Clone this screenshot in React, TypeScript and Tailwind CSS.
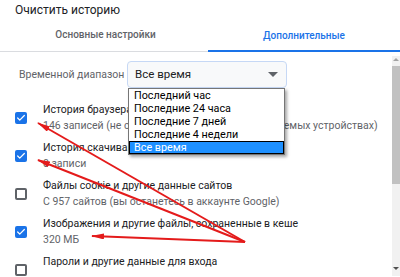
import { Check } from "lucide-react";

const options = [
  "Последний час",
  "Последние 24 часа",
  "Последние 7 дней",
  "Последние 4 недели",
  "Все время",
];

const items = [
  {
    title: "История браузера",
    sub: "146 записей (не считая данных на синхронизируемых устройствах)",
    checked: true,
  },
  { title: "История скачиваний", sub: "0 записи", checked: true },
  {
    title: "Файлы cookie и другие данные сайтов",
    sub: "С 957 сайтов (вы останетесь в аккаунте Google)",
    checked: false,
  },
  {
    title: "Изображения и другие файлы, сохраненные в кеше",
    sub: "320 МБ",
    checked: true,
  },
  { title: "Пароли и другие данные для входа", sub: "", checked: false },
];

function Box({ checked }: { checked: boolean }) {
  if (checked) {
    return (
      <span className="flex h-[12px] w-[12px] shrink-0 items-center justify-center rounded-[2px] bg-[#1a73e8]">
        <Check className="h-[10px] w-[10px] text-white" strokeWidth={3} />
      </span>
    );
  }
  return (
    <span className="h-[12px] w-[12px] shrink-0 rounded-[2px] border-2 border-[#5f6368]" />
  );
}

// red annotation arrows drawn over the dialog
function Arrows() {
  const tips: [number, number][] = [
    [38, 123],
    [38, 160],
    [92, 236],
  ];
  return (
    <svg
      className="pointer-events-none absolute left-0 top-0"
      width={400}
      height={277}
    >
      <defs>
        <marker
          id="head"
          viewBox="0 0 13 6"
          refX="12"
          refY="3"
          markerWidth="13"
          markerHeight="6"
          markerUnits="userSpaceOnUse"
          orient="auto"
        >
          <path d="M0 0L13 3L0 6z" fill="#e41b1b" />
        </marker>
      </defs>
      {tips.map(([x, y]) => (
        <line
          key={y}
          x1={245}
          y1={242}
          x2={x}
          y2={y}
          stroke="#e41b1b"
          strokeWidth={2}
          markerEnd="url(#head)"
        />
      ))}
    </svg>
  );
}

export default function App() {
  return (
    <div className="relative h-[277px] w-[400px] overflow-hidden bg-white font-['Roboto',sans-serif] text-[#202124]">
      <div className="h-[24px] pl-[15px] pt-[2px] text-[12px] leading-[16px]">
        Очистить историю
      </div>

      <div className="flex h-[28px] border-b border-[#dadce0] text-[10px] font-medium">
        <div className="ml-[11px] flex w-[193px] items-center justify-center pb-[6px] text-[#5f6368]">
          Основные настройки
        </div>
        <div className="-mb-px ml-[8px] flex w-[192px] shrink-0 items-center justify-center border-b-2 border-[#1a73e8] pb-[4px] text-[#1a73e8]">
          Дополнительные
        </div>
      </div>

      <div className="mt-[4px] flex h-[220px]">
        <div className="flex-1">
          <div className="mt-[5px] flex h-[27px] items-center">
            <span className="w-[127px] shrink-0 whitespace-nowrap pl-[19px] text-[10.5px] text-[#5f6368]">
              Временной диапазон
            </span>
            <div className="flex h-[27px] w-[160px] items-center justify-between rounded-[4px] border border-[#c6d8f5] bg-[#f8f9fa] pl-[7px] pr-[8px] text-[11.5px]">
              <span>Все время</span>
              <span className="h-0 w-0 border-x-[5px] border-t-[5px] border-x-transparent border-t-[#5f6368]" />
            </div>
          </div>

          <div className="mt-[14px]">
            {items.map((it) => (
              <div key={it.title} className="flex h-[38px] items-start">
                <div className="flex h-[32px] items-center pl-[15px] pr-[16px]">
                  <Box checked={it.checked} />
                </div>
                <div className="whitespace-nowrap text-[10.5px] leading-[16px]">
                  <div>{it.title}</div>
                  {it.sub ? <div className="text-[#5f6368]">{it.sub}</div> : null}
                </div>
              </div>
            ))}
          </div>
        </div>

        <div className="flex w-[8px] shrink-0 flex-col items-center bg-[#f1f1f1]">
          <span className="mt-[2px] h-0 w-0 border-x-[3px] border-b-[3px] border-x-transparent border-b-[#a3a3a3]" />
          <div className="mt-[5px] h-[118px] w-full bg-[#c1c1c1]" />
          <span className="mt-auto mb-[6px] h-0 w-0 border-x-[3px] border-t-[3px] border-x-transparent border-t-[#505050]" />
        </div>
      </div>

      <div className="absolute left-[128px] top-[88px] w-[157px] border border-[#767676] bg-white text-[10.8px] leading-[13px] text-black shadow-[2px_2px_3px_rgba(0,0,0,0.35)]">
        {options.map((o) => (
          <div
            key={o}
            className={
              o === "Все время"
                ? "h-[13px] border border-black bg-[#1e90ff] pl-[4px] leading-[11px] text-white"
                : "h-[13px] pl-[5px]"
            }
          >
            {o}
          </div>
        ))}
      </div>

      <Arrows />
    </div>
  );
}
